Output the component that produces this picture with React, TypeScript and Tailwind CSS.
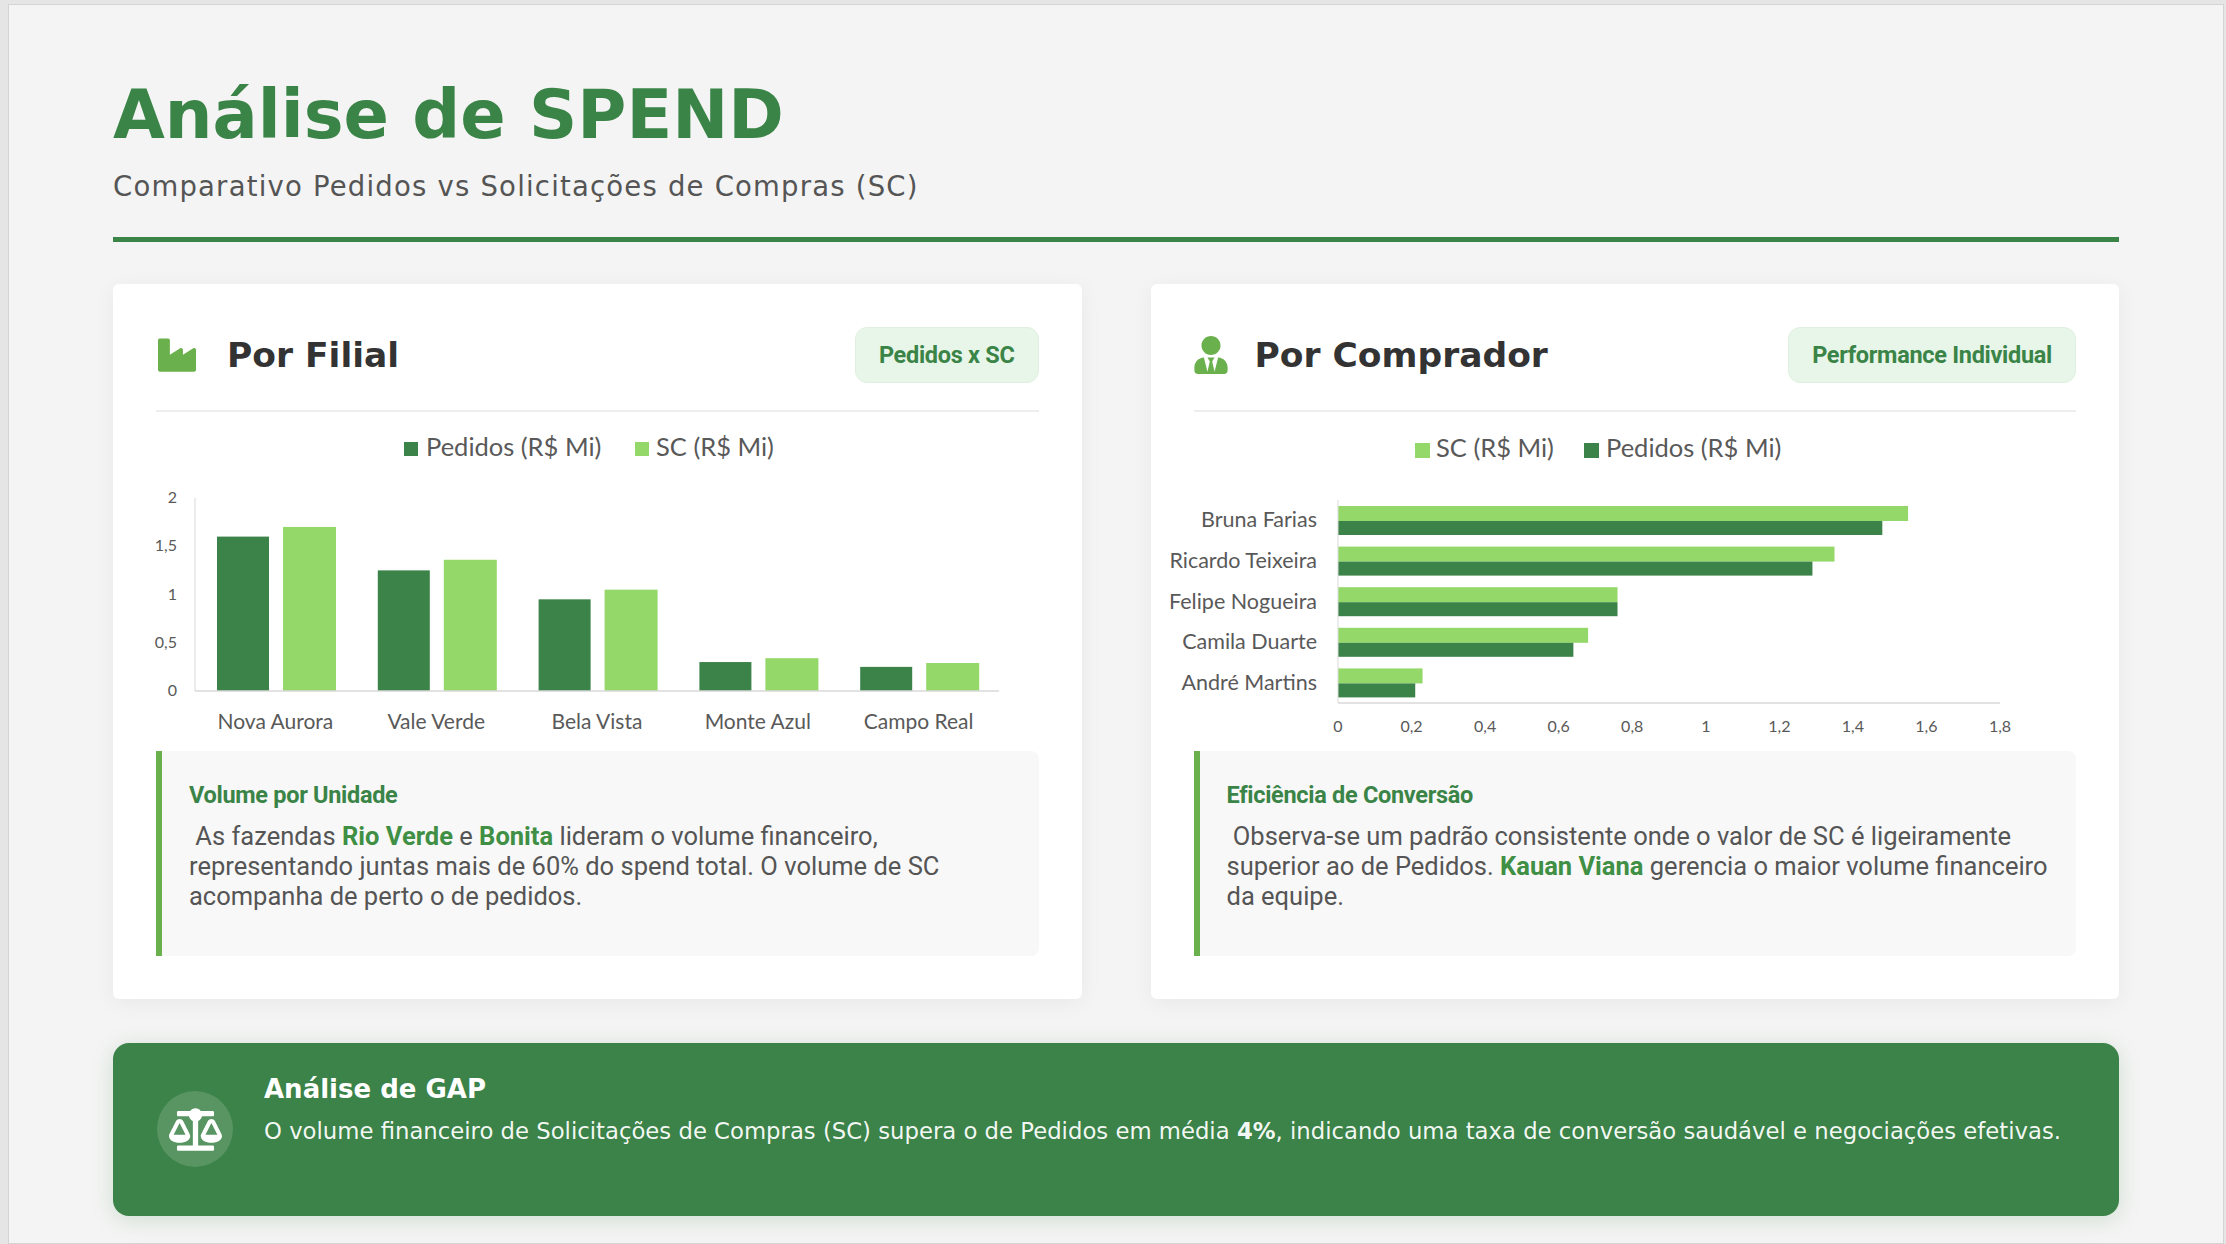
import { FaIndustry, FaUserTie, FaBalanceScale } from "react-icons/fa"
import type { ReactNode } from "react"

const DARK = "#3b8348"
const LIGHT = "#95d86a"
const AXIS = "#d9d9d9"
const LABEL = "#595959"

const filiais = [
  { name: "Nova Aurora", pedidos: 1.6, sc: 1.7 },
  { name: "Vale Verde", pedidos: 1.25, sc: 1.36 },
  { name: "Bela Vista", pedidos: 0.95, sc: 1.05 },
  { name: "Monte Azul", pedidos: 0.3, sc: 0.34 },
  { name: "Campo Real", pedidos: 0.25, sc: 0.29 },
]

const compradores = [
  { name: "Bruna Farias", sc: 1.55, pedidos: 1.48 },
  { name: "Ricardo Teixeira", sc: 1.35, pedidos: 1.29 },
  { name: "Felipe Nogueira", sc: 0.76, pedidos: 0.76 },
  { name: "Camila Duarte", sc: 0.68, pedidos: 0.64 },
  { name: "André Martins", sc: 0.23, pedidos: 0.21 },
]

function FilialChart() {
  const x0 = 39
  const y0 = 279
  const top = 86
  const right = 843
  const unit = (y0 - top) / 2
  const cat = (right - x0) / filiais.length
  const ticks = [
    { v: 0, l: "0" },
    { v: 0.5, l: "0,5" },
    { v: 1, l: "1" },
    { v: 1.5, l: "1,5" },
    { v: 2, l: "2" },
  ]
  return (
    <svg width={881} height={339} className="block overflow-visible font-['Lato',sans-serif]">
      <rect x={248} y={30} width={14} height={14} fill={DARK} />
      <text x={270} y={44} fontSize={25.5} fill={LABEL}>
        Pedidos (R$ Mi)
      </text>
      <rect x={479} y={30} width={14} height={14} fill={LIGHT} />
      <text x={500} y={44} fontSize={25.5} fill={LABEL}>
        SC (R$ Mi)
      </text>

      {ticks.map((t) => (
        <text key={t.l} x={21} y={y0 - t.v * unit + 5} fontSize={16} fill={LABEL} textAnchor="end">
          {t.l}
        </text>
      ))}
      <line x1={x0} y1={top} x2={x0} y2={y0} stroke={AXIS} strokeWidth={1} />

      {filiais.map((f, i) => (
        <g key={f.name}>
          <rect x={x0 + i * cat + 22} y={y0 - f.pedidos * unit} width={52} height={f.pedidos * unit} fill={DARK} />
          <rect x={x0 + i * cat + 88} y={y0 - f.sc * unit} width={53} height={f.sc * unit} fill={LIGHT} />
          <text x={x0 + i * cat + cat / 2} y={317} fontSize={21} fill={LABEL} textAnchor="middle">
            {f.name}
          </text>
        </g>
      ))}
      <line x1={x0} y1={y0} x2={right} y2={y0} stroke={AXIS} strokeWidth={1.5} />
    </svg>
  )
}

function CompradorChart() {
  const x0 = 144
  const top = 88
  const y0 = 291
  const right = 806
  const unit = (right - x0) / 1.8
  const rowH = (y0 - top) / compradores.length
  const ticks = ["0", "0,2", "0,4", "0,6", "0,8", "1", "1,2", "1,4", "1,6", "1,8"]
  return (
    <svg width={882} height={339} className="block overflow-visible font-['Lato',sans-serif]">
      <rect x={221} y={31} width={15} height={15} fill={LIGHT} />
      <text x={242} y={45} fontSize={25.5} fill={LABEL}>
        SC (R$ Mi)
      </text>
      <rect x={390} y={31} width={15} height={15} fill={DARK} />
      <text x={412} y={45} fontSize={25.5} fill={LABEL}>
        Pedidos (R$ Mi)
      </text>

      {compradores.map((c, i) => {
        const rt = top + i * rowH
        return (
          <g key={c.name}>
            <text x={123} y={rt + rowH / 2 + 7} fontSize={21.5} fill={LABEL} textAnchor="end">
              {c.name}
            </text>
            <rect x={x0} y={rt + 6} width={c.sc * unit} height={15} fill={LIGHT} />
            <rect x={x0} y={rt + 21} width={c.pedidos * unit} height={14} fill={DARK} />
          </g>
        )
      })}
      <line x1={x0} y1={top} x2={x0} y2={y0} stroke={AXIS} strokeWidth={1} />
      <line x1={x0} y1={y0} x2={right} y2={y0} stroke={AXIS} strokeWidth={1.5} />

      {ticks.map((t, i) => (
        <text key={t} x={x0 + i * 0.2 * unit} y={320} fontSize={16} fill={LABEL} textAnchor="middle">
          {t}
        </text>
      ))}
    </svg>
  )
}

function Hl({ children }: { children: ReactNode }) {
  return <span className="font-bold text-[#3f8f45]">{children}</span>
}

function Panel({
  icon,
  title,
  badge,
  chart,
  noteTitle,
  note,
}: {
  icon: ReactNode
  title: string
  badge: string
  chart: ReactNode
  noteTitle: string
  note: ReactNode
}) {
  return (
    <div className="flex-1 rounded-[6px] bg-white p-[43px] shadow-[0_4px_22px_rgba(0,0,0,0.05)]">
      <div className="flex h-[85px] items-start justify-between border-b-2 border-[#eeeeee]">
        <div className="flex h-[56px] items-center">
          {icon}
          <h2 className="font-['DejaVu_Sans',sans-serif] text-[34.5px] font-bold leading-none text-[#333333]">
            {title}
          </h2>
        </div>
        <span className="flex h-[56px] items-center rounded-[12px] border border-[#e0f0e0] bg-[#e8f5e9] px-[23px] font-['Roboto',sans-serif] text-[23.5px] font-bold tracking-[-0.3px] text-[#3a8447]">
          {badge}
        </span>
      </div>
      {chart}
      <div className="rounded-r-[8px] border-l-[6px] border-[#6ab04c] bg-[#f8f8f8] pt-[30px] pr-[26px] pb-[45px] pl-[27px] font-['Roboto',sans-serif]">
        <h3 className="mb-[12px] text-[23.5px] leading-[28px] font-bold tracking-[-0.3px] text-[#3a8447]">
          {noteTitle}
        </h3>
        <p className="text-[25.5px] leading-[30px] text-[#555555]">{note}</p>
      </div>
    </div>
  )
}

export default function App() {
  return (
    <div className="min-h-screen bg-[#e5e5e5] pt-[4px] pr-[2px] pl-[8px]">
      <div className="min-h-[1240px] border border-[#d4d4d4] bg-[#f4f4f4]">
        <div className="mx-auto w-[2006px] pt-[74px] pb-[25px]">
          <header>
            <h1 className="font-['DejaVu_Sans',sans-serif] text-[67px] leading-[1.1] font-bold text-[#3a8447]">
              Análise de SPEND
            </h1>
            <p className="mt-[16px] font-['DejaVu_Sans',sans-serif] text-[27.5px] leading-[1.3] tracking-[1.2px] text-[#555555]">
              Comparativo Pedidos vs Solicitações de Compras (SC)
            </p>
          </header>
          <div className="mt-[33px] h-[5px] bg-[#3a8447]" />

          <section className="mt-[42px] flex gap-[69px]">
            <Panel
              icon={<FaIndustry size={38} className="mr-[31px] ml-[2px] text-[#6ab04c]" />}
              title="Por Filial"
              badge="Pedidos x SC"
              chart={<FilialChart />}
              noteTitle="Volume por Unidade"
              note={
                <>
                  {"\u00a0"}As fazendas <Hl>Rio Verde</Hl> e <Hl>Bonita</Hl> lideram o volume financeiro,
                  <br />
                  representando juntas mais de 60% do spend total. O volume de SC
                  <br />
                  acompanha de perto o de pedidos.
                </>
              }
            />
            <Panel
              icon={<FaUserTie size={38} className="mr-[25px] ml-[-2px] text-[#6ab04c]" />}
              title="Por Comprador"
              badge="Performance Individual"
              chart={<CompradorChart />}
              noteTitle="Eficiência de Conversão"
              note={
                <>
                  {"\u00a0"}Observa-se um padrão consistente onde o valor de SC é ligeiramente
                  <br />
                  superior ao de Pedidos. <Hl>Kauan Viana</Hl> gerencia o maior volume financeiro
                  <br />
                  da equipe.
                </>
              }
            />
          </section>

          <section className="mt-[44px] flex h-[173px] items-start gap-[31px] rounded-[16px] bg-[#3b8348] px-[44px] pt-[31px] shadow-[0_4px_22px_rgba(46,125,50,0.18)]">
            <div className="mt-[17px] flex h-[76px] w-[76px] shrink-0 items-center justify-center rounded-full bg-white/15">
              <FaBalanceScale size={53} className="text-white" />
            </div>
            <div className="font-['DejaVu_Sans',sans-serif] text-white">
              <h3 className="text-[26px] leading-[30px] font-bold">Análise de GAP</h3>
              <p className="mt-[12px] text-[22.75px] leading-[30px] text-white/95">
                O volume financeiro de Solicitações de Compras (SC) supera o de Pedidos em média <b>4%</b>, indicando uma
                taxa de conversão saudável e negociações efetivas.
              </p>
            </div>
          </section>
        </div>
      </div>
    </div>
  )
}
